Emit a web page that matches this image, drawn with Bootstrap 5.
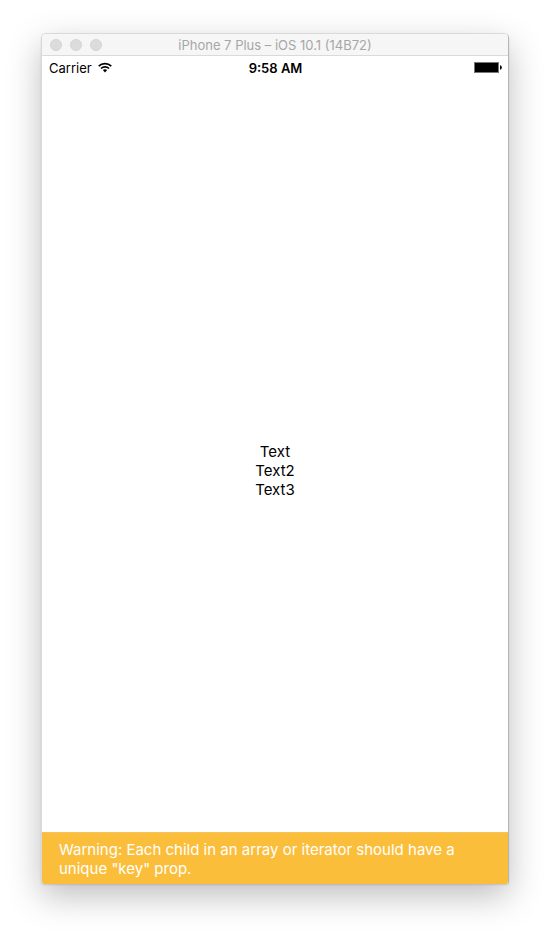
<!DOCTYPE html>
<html lang="en">
<head>
<meta charset="utf-8">
<meta name="viewport" content="width=device-width, initial-scale=1">
<title>iPhone 7 Plus – iOS 10.1 (14B72)</title>
<link href="https://cdn.jsdelivr.net/npm/bootstrap@5.3.0/dist/css/bootstrap.min.css" rel="stylesheet">
<style>
body { font-family: Inter, "Liberation Sans", sans-serif; color: #000; background: #fff; padding: 33px 41px 50px; }
.sim-window { border: 1px solid #dadada; border-right-color: #b5b5b5; border-bottom: 0; border-radius: 5px 5px 3px 3px; box-shadow: 0 12px 34px rgba(0,0,0,.26), 0 1px 2px rgba(0,0,0,.12); }
.title-bar { height: 22px; background: #f6f6f6; border-bottom: 1px solid #dadada; }
.window-dots { width: 60px; gap: 8px; margin: 0 8px; }
.window-dot { width: 12px; height: 12px; background: #dcdcdc; border: 1px solid #d4d4d4; }
.window-title { font-size: 13px; line-height: 22px; color: #a6a6a6; }
.status-bar { font-size: 13px; line-height: 24px; padding: 0 6px 0 7px; }
.status-bar svg { margin-bottom: 2px; }
.carrier { gap: 6px; }
.app-text { font-size: 15px; line-height: 19px; padding-top: 28px; }
.warning-bar { background: #fbbe3b; border-top: 1px solid #f3c35f; color: #fff; font-size: 15px; line-height: 19px; padding: 7px 17px 6px; }
</style>
<script src="https://cdn.jsdelivr.net/npm/bootstrap@5.3.0/dist/js/bootstrap.bundle.min.js"></script>
</head>
<body class="d-flex flex-column min-vh-100">
<div class="sim-window d-flex flex-column flex-grow-1 bg-white overflow-hidden">
  <header class="title-bar d-flex align-items-center">
    <div class="window-dots d-flex">
      <span class="window-dot rounded-circle"></span>
      <span class="window-dot rounded-circle"></span>
      <span class="window-dot rounded-circle"></span>
    </div>
    <div class="window-title flex-grow-1 text-center text-nowrap">iPhone 7 Plus – iOS 10.1 (14B72)</div>
    <div class="window-dots"></div>
  </header>
  <div class="status-bar d-flex align-items-center">
    <div class="carrier col d-flex align-items-center">
      <span>Carrier</span>
      <svg width="14" height="11" viewBox="0 0 14 11" fill="none" stroke="#000" stroke-width="1.7" aria-label="Wi-Fi">
        <path d="M.7 4.1A9 9 0 0 1 13.3 4.1M3 6.5A5.7 5.7 0 0 1 11 6.5"/>
        <path d="M4.8 8.1Q7 6.3 9.2 8.1L7 10.4Z" fill="#000" stroke="none"/>
      </svg>
    </div>
    <div class="fw-semibold">9:58 AM</div>
    <div class="col d-flex justify-content-end">
      <svg width="28" height="11" viewBox="0 0 28 11" aria-label="Battery full">
        <rect x=".5" y=".5" width="24" height="10" fill="#000" stroke="#777"/>
        <path d="M26 3.5h1q1.6 2 0 4h-1z"/>
      </svg>
    </div>
  </div>
  <main class="app-text flex-grow-1 d-flex flex-column align-items-center justify-content-center">
    <div>Text</div>
    <div>Text2</div>
    <div>Text3</div>
  </main>
  <footer class="warning-bar" role="status">Warning: Each child in an array or iterator should have a unique "key" prop.</footer>
</div>
</body>
</html>
